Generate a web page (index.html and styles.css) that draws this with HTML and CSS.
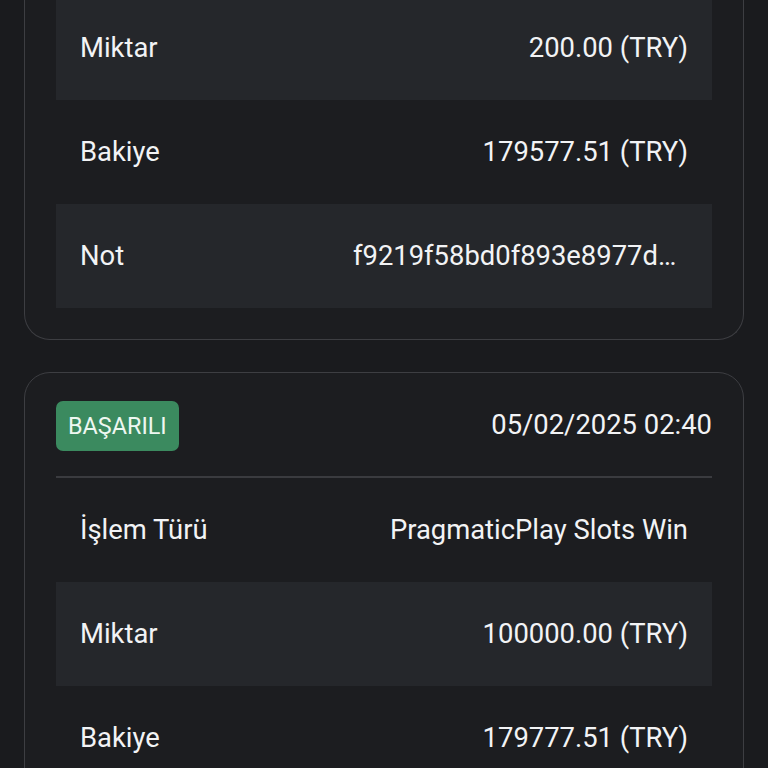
FILE: index.html
```html
<!DOCTYPE html>
<html lang="tr">
<head>
  <meta charset="UTF-8" />
  <meta name="viewport" content="width=device-width, initial-scale=1.0"/>
  <title>İşlem Geçmişi</title>
  <link rel="stylesheet" href="styles.css">
</head>
<body>
  <div class="list">
    <!-- previous transaction, scrolled partly out of view -->
    <div class="card card-cut">
      <div class="rows">
        <div class="row striped">
          <span class="label">Miktar</span>
          <span class="value">200.00 (TRY)</span>
        </div>
        <div class="row">
          <span class="label">Bakiye</span>
          <span class="value">179577.51 (TRY)</span>
        </div>
        <div class="row striped">
          <span class="label">Not</span>
          <span class="value note">f9219f58bd0f893e8977d5c1a2b04e7f</span>
        </div>
      </div>
    </div>

    <div class="card">
      <div class="card-head">
        <span class="badge success">BAŞARILI</span>
        <span class="date">05/02/2025 02:40</span>
      </div>
      <div class="rows">
        <div class="row">
          <span class="label">İşlem Türü</span>
          <span class="value">PragmaticPlay Slots Win</span>
        </div>
        <div class="row striped">
          <span class="label">Miktar</span>
          <span class="value">100000.00 (TRY)</span>
        </div>
        <div class="row">
          <span class="label">Bakiye</span>
          <span class="value">179777.51 (TRY)</span>
        </div>
        <div class="row striped">
          <span class="label">Not</span>
          <span class="value note">a41c7e0b93d2f6851e07c4b9d2aa3f10</span>
        </div>
      </div>
    </div>
  </div>
</body>
</html>
```

FILE: styles.css
```css
html, body {
  margin: 0;
  padding: 0;
  background-color: #1a1b1e;
  height: 768px;
  overflow: hidden;
}
body {
  font-family: Roboto, "Noto Sans", sans-serif;
  font-size: 27.4px;
  color: #f2f3f5;
}
.list {
  padding: 0 24px;
  display: flex;
  flex-direction: column;
  gap: 32px;
}
.card {
  background-color: #1c1d20;
  border: 1px solid #3d3e42;
  border-radius: 26px;
  padding: 28px 31px 31px;
}
.card-cut {
  border-top: none;
  border-top-left-radius: 0;
  border-top-right-radius: 0;
  padding-top: 0;
  margin-top: -4px;
}
.card-head {
  display: flex;
  align-items: center;
  justify-content: space-between;
  padding-bottom: 25px;
  border-bottom: 2px solid #3a3b3f;
}
.badge {
  height: 50px;
  padding: 0 12px;
  display: flex;
  align-items: center;
  border-radius: 7px;
  font-size: 23.4px;
}
.success {
  background-color: #3b8a5f;
  color: #eef7f1;
}
.date {
  margin-top: -3px;
}
.row {
  height: 104px;
  padding: 0 24px;
  display: flex;
  align-items: center;
  justify-content: space-between;
  gap: 40px;
}
.striped {
  background-color: #25272b;
}
.value {
  white-space: nowrap;
}
.note {
  max-width: 335px;
  overflow: hidden;
  text-overflow: ellipsis;
}
```
